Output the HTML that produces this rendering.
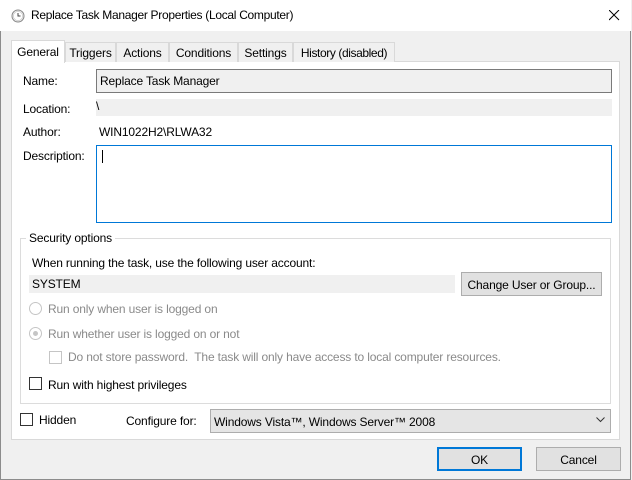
<!DOCTYPE html>
<html><head><meta charset="utf-8"><style>
*{box-sizing:border-box;margin:0;padding:0}
body{width:632px;height:480px;background:#f0f0f0;font-family:"Liberation Sans",sans-serif;font-size:12px;color:#000;position:relative;overflow:hidden;letter-spacing:-0.15px}
.a{position:absolute;white-space:nowrap}
.win{position:absolute;left:0;top:0;width:631px;height:480px;border:1px solid #8c8c8c;border-top:none}
.tab{position:absolute;top:42px;height:20px;border:1px solid #d9d9d9;border-bottom:none;background:#f0f0f0;padding:3px 0 0;font-size:12px;white-space:nowrap;text-align:center;overflow:hidden}
.gray{color:#8a8a8a}
.cb{position:absolute;width:13px;height:13px;border:1px solid #333;background:#fff}
.rd{position:absolute;width:13px;height:13px;border:1px solid #c5c5c5;border-radius:50%;background:#fff}
.btn{position:absolute;background:#e1e1e1;border:1px solid #adadad;text-align:center;font-size:12px;white-space:nowrap}
</style></head><body>
<div class="win"></div>
<div class="a" style="left:0;top:0;width:631px;height:31px;background:#fff"></div>
<svg class="a" style="left:11px;top:9px" width="14" height="14" viewBox="0 0 14 14"><circle cx="7" cy="7" r="6" fill="#eee" stroke="#888"/><circle cx="7" cy="7" r="4.5" fill="#fff" stroke="#bbb" stroke-width=".5"/><path d="M7 4v3h2.5" stroke="#444" fill="none"/></svg>
<div class="a" style="left:31px;top:8px;font-size:12px;letter-spacing:-0.3px">Replace Task Manager Properties (Local Computer)</div>
<svg class="a" style="left:609px;top:10px" width="11" height="11"><path d="M0 0L10 10M10 0L0 10" stroke="#000" stroke-width="1"/></svg>
<div class="a" style="left:11px;top:61px;width:609px;height:379px;background:#fff;border:1px solid #d9d9d9"></div>
<div class="tab" style="left:11px;top:40px;height:23px;background:#fff;width:54px;padding-top:4px">General</div>
<div class="tab" style="left:65px;width:51px">Triggers</div>
<div class="tab" style="left:116px;width:53px">Actions</div>
<div class="tab" style="left:169px;width:69px">Conditions</div>
<div class="tab" style="left:238px;width:55px">Settings</div>
<div class="tab" style="left:293px;width:102px;letter-spacing:-0.4px">History (disabled)</div>
<div class="a" style="left:23px;top:74px">Name:</div>
<div class="a" style="left:96px;top:69px;width:516px;height:24px;border:1px solid #7a7a7a;background:#f0f0f0;padding:4px 3px">Replace Task Manager</div>
<div class="a" style="left:23px;top:102px">Location:</div>
<div class="a" style="left:96px;top:99px;width:516px;height:17px;background:#f0f0f0">\</div>
<div class="a" style="left:23px;top:125px">Author:</div>
<div class="a" style="left:99px;top:125px">WIN1022H2\RLWA32</div>
<div class="a" style="left:23px;top:149px">Description:</div>
<div class="a" style="left:96px;top:145px;width:516px;height:78px;border:1px solid #0078d7;background:#fff"></div>
<div class="a" style="left:102px;top:150px;width:1px;height:13px;background:#000"></div>
<div class="a" style="left:20px;top:238px;width:591px;height:166px;border:1px solid #dcdcdc"></div>
<div class="a" style="left:26px;top:231px;background:#fff;padding:0 3px">Security options</div>
<div class="a" style="left:32px;top:256px">When running the task, use the following user account:</div>
<div class="a" style="left:29px;top:275px;width:426px;height:18px;background:#f0f0f0;padding:2px 3px">SYSTEM</div>
<div class="btn" style="left:461px;top:272px;width:141px;height:24px;padding-top:5px">Change User or Group...</div>
<div class="rd" style="left:29px;top:302px"></div>
<div class="a gray" style="left:48px;top:302px">Run only when user is logged on</div>
<div class="rd" style="left:29px;top:327px"><div style="position:absolute;left:3px;top:3px;width:5px;height:5px;border-radius:50%;background:#c5c5c5"></div></div>
<div class="a gray" style="left:48px;top:327px">Run whether user is logged on or not</div>
<div class="cb" style="left:49px;top:351px;border-color:#c5c5c5"></div>
<div class="a gray" style="left:68px;top:350px">Do not store password.&nbsp; The task will only have access to local computer resources.</div>
<div class="cb" style="left:29px;top:377px"></div>
<div class="a" style="left:48px;top:378px">Run with highest privileges</div>
<div class="cb" style="left:20px;top:413px"></div>
<div class="a" style="left:39px;top:413px">Hidden</div>
<div class="a" style="left:126px;top:414px">Configure for:</div>
<div class="a" style="left:210px;top:409px;width:401px;height:24px;background:#e5e5e5;border:1px solid #adadad;padding:5px 3px">Windows Vista™, Windows Server™ 2008</div>
<svg class="a" style="left:596px;top:417px" width="9" height="6"><path d="M0.5 0.5L4.5 4.5L8.5 0.5" stroke="#333" fill="none"/></svg>
<div class="btn" style="left:437px;top:447px;width:85px;height:24px;border:2px solid #0078d7;padding-top:4px">OK</div>
<div class="btn" style="left:536px;top:447px;width:85px;height:24px;padding-top:5px">Cancel</div>
</body></html>
